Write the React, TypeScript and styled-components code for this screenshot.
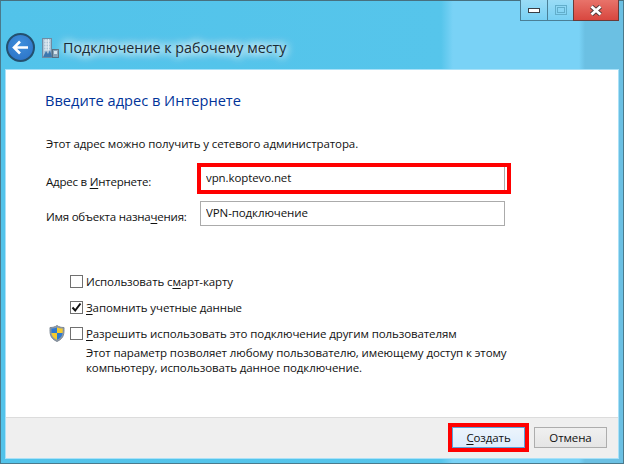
import React from "react";
import styled, { createGlobalStyle } from "styled-components";

const GlobalStyle = createGlobalStyle`
  html, body {
    margin: 0;
    padding: 0;
    background: #64c6ec;
  }
  * {
    box-sizing: border-box;
  }
`;

const Window = styled.div`
  width: 624px;
  height: 464px;
  display: flex;
  flex-direction: column;
  border: 1px solid #4a7a8c;
  border-top: 1px solid #47707f;
  background: linear-gradient(90deg, #52c3ea 0, #56c5eb 440px, #79d2f6 452px, #79d2f6 578px, #6bc0e3 584px, #6bc0e3 100%);
  font-family: "Open Sans", "Noto Sans", "Liberation Sans", sans-serif;
  font-size: 11.5px;
  letter-spacing: -0.1px;
  color: #111;
`;

const CaptionBar = styled.div`
  height: 69px;
  flex: none;
  display: flex;
  align-items: flex-end;
  justify-content: space-between;
  position: relative;
  padding: 0 0 8px 5px;
`;

const CaptionLeft = styled.div`
  display: flex;
  align-items: center;
`;

const BackButton = styled.div`
  width: 29px;
  height: 29px;
  border-radius: 50%;
  background: radial-gradient(circle at 50% 35%, #3f8fdc, #2a70c4);
  border: 2px solid #24506f;
  display: flex;
  align-items: center;
  justify-content: center;
  margin-right: 7px;
`;

const WindowTitle = styled.span`
  margin-left: 4px;
  font-size: 14.3px;
  letter-spacing: 0;
  line-height: 20px;
  color: #1b2a33;
  text-shadow: 0 0 8px #fff, 0 0 10px #fff, 0 0 12px #fff;
`;

const WindowControls = styled.div`
  position: absolute;
  top: -1px;
  right: 4px;
  display: flex;
  height: 21px;
`;

const ControlButton = styled.div<{ $width: number; $close?: boolean }>`
  width: ${(p) => p.$width}px;
  display: flex;
  align-items: center;
  justify-content: center;
  border: 1px solid ${(p) => (p.$close ? "#6b3a38" : "#4a7f96")};
  border-top: none;
  margin-left: -1px;
  background: ${(p) =>
    p.$close
      ? "linear-gradient(180deg, #e8736a, #d8473f)"
      : "linear-gradient(180deg, #9adcf6, #79d0f3)"};
`;

const MinimizeGlyph = styled.div`
  width: 12px;
  height: 5px;
  background: #fff;
  border: 1px solid #3a3f45;
`;

const MaximizeGlyph = styled.div`
  width: 12px;
  height: 10px;
  border: 1px solid #62aecb;
  display: flex;
  align-items: center;
  justify-content: center;
  &::after {
    content: "";
    width: 6px;
    height: 4px;
    border: 1px solid #62aecb;
  }
`;

const Sheet = styled.div`
  margin: 0 5px 0 5px;
  flex: 1;
  display: flex;
  flex-direction: column;
  background: #fff;
  box-shadow: 0 0 0 1px #a9e1f8;
`;

const Body = styled.div`
  flex: 1;
  padding: 20px 0 0 39px;
`;

const Heading = styled.h1`
  margin: 0 0 24px;
  font-size: 14.6px;
  font-weight: 400;
  letter-spacing: 0;
  line-height: 21px;
  color: #003399;
`;

const Intro = styled.p`
  margin: 0 0 14px 1px;
  line-height: 17px;
`;

const FieldRow = styled.div`
  display: flex;
  align-items: center;
  height: 25px;
  margin-bottom: 10px;
  padding-left: 1px;
`;

const FieldLabel = styled.label`
  width: 154px;
  flex: none;
  padding-top: 6px;
  letter-spacing: -0.22px;
`;

const FieldWrap = styled.div`
  position: relative;
  width: 305px;
  height: 25px;
`;

const TextInput = styled.input`
  width: 100%;
  height: 100%;
  padding: 0 5px 3px;
  border: 1px solid #ababab;
  background: #fff;
  color: #111;
  font: inherit;
  letter-spacing: inherit;
  outline: none;
`;

const Highlight = styled.div<{ $top: number; $right: number; $bottom: number; $left: number }>`
  position: absolute;
  top: ${(p) => p.$top}px;
  right: ${(p) => p.$right}px;
  bottom: ${(p) => p.$bottom}px;
  left: ${(p) => p.$left}px;
  border: 4px solid #ff0000;
  pointer-events: none;
`;

const Options = styled.div`
  margin-top: 47px;
  display: flex;
  flex-direction: column;
`;

const OptionRow = styled.div<{ $gap: number }>`
  display: flex;
  align-items: center;
  position: relative;
  height: 17px;
  padding-left: 25px;
  margin-bottom: ${(p) => p.$gap}px;
`;

const ShieldSlot = styled.div`
  position: absolute;
  left: 4px;
  top: 0;
  width: 16px;
  height: 17px;
`;

const CheckBox = styled.div`
  width: 13px;
  height: 13px;
  flex: none;
  margin-right: 3px;
  border: 1px solid #707070;
  background: #fff;
  display: flex;
  align-items: center;
  justify-content: center;
`;

const Hint = styled.p`
  margin: 3px 0 0 41px;
  line-height: 15px;
`;

const Footer = styled.div`
  flex: none;
  height: 41px;
  background: #efefef;
  border-top: 1px solid #dcdcdc;
  display: flex;
  align-items: flex-start;
  justify-content: flex-end;
  gap: 9px;
  padding: 9px 11px 0 0;
`;

const ActionButton = styled.div<{ $primary?: boolean }>`
  position: relative;
  width: 73px;
  height: 21px;
  display: flex;
  align-items: center;
  justify-content: center;
  line-height: 17px;
  border: 1px solid ${(p) => (p.$primary ? "#5aa0d8" : "#adadad")};
  background: ${(p) =>
    p.$primary ? "linear-gradient(180deg, #ecf4fc, #dcecfc)" : "linear-gradient(180deg, #f0f0f0, #e5e5e5)"};
`;

const Ul = styled.span`
  text-decoration: underline;
  text-underline-offset: 2px;
  text-decoration-thickness: 1px;
`;

const BottomEdge = styled.div`
  height: 5px;
  flex: none;
`;

const ArrowIcon = () => (
  <svg width="17" height="15" viewBox="0 0 17 15">
    <path d="M8 1.5 2 7.5l6 6M2.5 7.5H16" fill="none" stroke="#fff" strokeWidth="2.6" />
  </svg>
);

const NetworkIcon = () => (
  <svg width="17" height="20" viewBox="0 0 17 20">
    <rect x="0.5" y="0.5" width="9" height="19" fill="#a9c3d6" stroke="#6f8ba3" />
    <path d="M2 3h6M2 6h6M2 9h6M2 12h6M4 1v11M6.5 1v11" stroke="#e3edf4" strokeWidth="1" />
    <path d="M1 19l3-6 2 3 2-4 2 7z" fill="#3c78b0" />
    <rect x="10.5" y="11.5" width="6" height="8" fill="#87a3b8" stroke="#566f82" />
    <rect x="12" y="13" width="3" height="3" fill="#d7e4ec" />
  </svg>
);

const ShieldIcon = () => (
  <svg width="16" height="17" viewBox="0 0 16 17">
    <path d="M8 .5c2 1.500 4 2 7 2 0 6 .5 10.500-7 14C.5 13 1 8.500 1 2.500c3 0 5-.5 7-2z" fill="#8e9aa8" stroke="#7d8894" />
    <path d="M8 2.500V8H2.500c0-1.500 0-3-.2-4.500C4.500 3.500 6.500 3.200 8 2.500z" fill="#2e79d0" />
    <path d="M8 2.500c1.500.7 3.500 1 5.700 1 0 1.500 0 3-.2 4.500H8z" fill="#f6cc2e" />
    <path d="M2.500 8H8v6.800C4.500 13.500 2.900 11 2.500 8z" fill="#f6cc2e" />
    <path d="M8 8h5.500c-.4 3-2 5.500-5.500 6.800z" fill="#2e79d0" />
  </svg>
);

const CloseIcon = () => (
  <svg width="14" height="11" viewBox="0 0 14 11">
    <path d="M2.500 1.500 11.500 9.500M11.500 1.500 2.500 9.500" stroke="#4a3a3a" strokeWidth="4.500" />
    <path d="M2.500 1.500 11.500 9.500M11.500 1.500 2.500 9.500" stroke="#fff" strokeWidth="2.800" />
  </svg>
);

const CheckMark = () => (
  <svg width="11" height="11" viewBox="0 0 11 11">
    <path d="M1.500 5.500 4.200 8.500 9.500 1.500" fill="none" stroke="#111" strokeWidth="2" />
  </svg>
);

export default function App() {
  return (
    <>
      <GlobalStyle />
      <Window>
        <CaptionBar>
          <CaptionLeft>
            <BackButton>
              <ArrowIcon />
            </BackButton>
            <NetworkIcon />
            <WindowTitle>Подключение к рабочему месту</WindowTitle>
          </CaptionLeft>
          <WindowControls>
            <ControlButton $width={28}>
              <MinimizeGlyph />
            </ControlButton>
            <ControlButton $width={27}>
              <MaximizeGlyph />
            </ControlButton>
            <ControlButton $width={46} $close>
              <CloseIcon />
            </ControlButton>
          </WindowControls>
        </CaptionBar>
        <Sheet>
          <Body>
            <Heading>Введите адрес в Интернете</Heading>
            <Intro>Этот адрес можно получить у сетевого администратора.</Intro>
            <FieldRow>
              <FieldLabel>
                Адрес в <Ul>И</Ul>нтернете:
              </FieldLabel>
              <FieldWrap>
                <TextInput readOnly value="vpn.koptevo.net" />
                <Highlight $top={-3} $right={-6} $bottom={-3} $left={-3} />
              </FieldWrap>
            </FieldRow>
            <FieldRow>
              <FieldLabel>
                Имя объекта назна<Ul>ч</Ul>ения:
              </FieldLabel>
              <FieldWrap>
                <TextInput readOnly value="VPN-подключение" />
              </FieldWrap>
            </FieldRow>
            <Options>
              <OptionRow $gap={9}>
                <CheckBox />
                <span>
                  Использовать с<Ul>м</Ul>арт-карту
                </span>
              </OptionRow>
              <OptionRow $gap={9}>
                <CheckBox>
                  <CheckMark />
                </CheckBox>
                <span>
                  <Ul>З</Ul>апомнить учетные данные
                </span>
              </OptionRow>
              <OptionRow $gap={0}>
                <ShieldSlot>
                  <ShieldIcon />
                </ShieldSlot>
                <CheckBox />
                <span>
                  <Ul>Р</Ul>азрешить использовать это подключение другим пользователям
                </span>
              </OptionRow>
              <Hint>
                Этот параметр позволяет любому пользователю, имеющему доступ к этому
                <br />
                компьютеру, использовать данное подключение.
              </Hint>
            </Options>
          </Body>
          <Footer>
            <ActionButton $primary>
              <span>
                <Ul>С</Ul>оздать
              </span>
              <Highlight $top={-5} $right={-5} $bottom={-5} $left={-5} />
            </ActionButton>
            <ActionButton>Отмена</ActionButton>
          </Footer>
        </Sheet>
        <BottomEdge />
      </Window>
    </>
  );
}
